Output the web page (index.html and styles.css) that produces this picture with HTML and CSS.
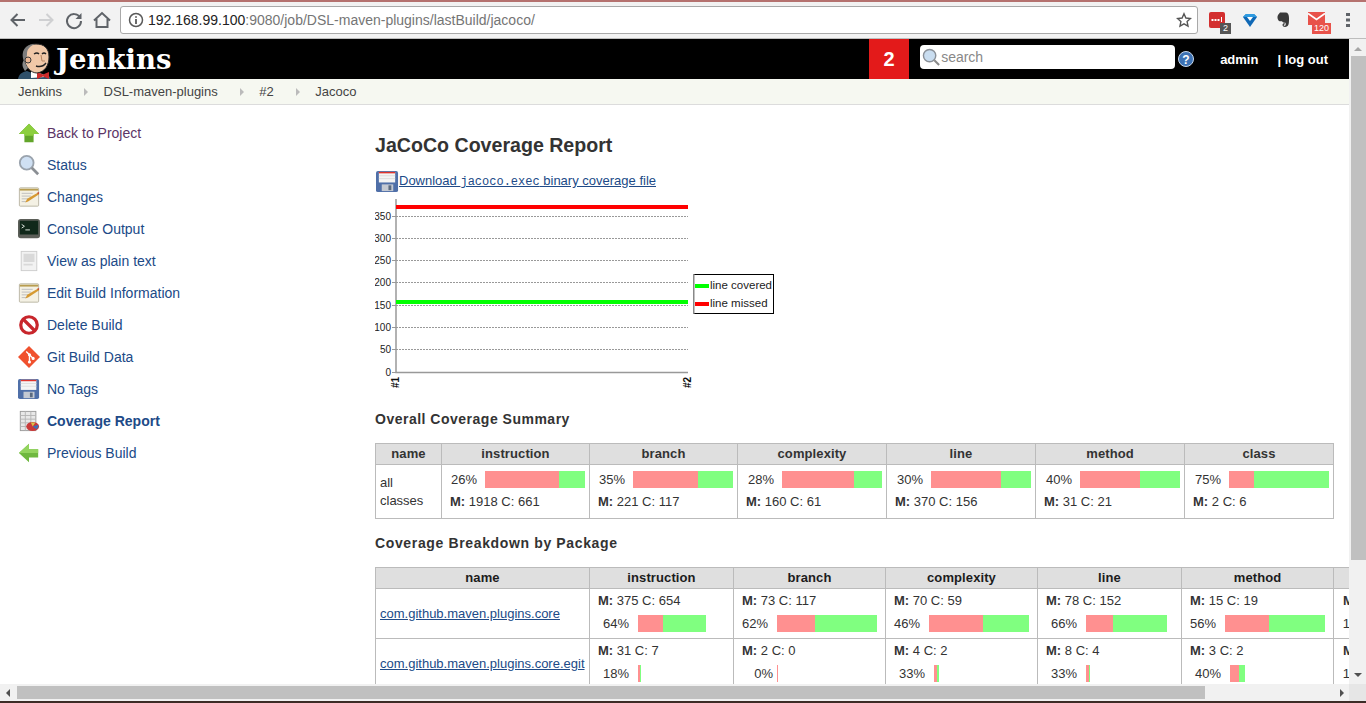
FILE: index.html
```html
<!DOCTYPE html>
<html lang="en">
<head>
<meta charset="utf-8">
<title>Jenkins</title>
<link rel="stylesheet" href="styles.css">
</head>
<body>
<div class="tabstrip"></div>
<div class="toolbar">
  <svg class="nav" width="22" height="22" viewBox="0 0 22 22"><path d="M18 11H5M10.500 5L4.500 11l6 6" fill="none" stroke="#5f6368" stroke-width="2"/></svg>
  <svg class="nav" width="22" height="22" viewBox="0 0 22 22"><path d="M4 11h13M11.500 5l6 6-6 6" fill="none" stroke="#cfd0d2" stroke-width="2"/></svg>
  <svg class="nav" width="22" height="22" viewBox="0 0 22 22"><path d="M17 8.500A7 7 0 1 0 18 12" fill="none" stroke="#5f6368" stroke-width="2"/><path d="M18.500 4v6h-6z" fill="#5f6368"/></svg>
  <svg class="nav" width="22" height="22" viewBox="0 0 22 22"><path d="M3 11.500L11 4l8 7.500M5.500 10v8h11v-8" fill="none" stroke="#5f6368" stroke-width="2"/></svg>
  <div class="omnibox">
    <svg width="16" height="16" viewBox="0 0 16 16"><circle cx="8" cy="8" r="6.500" fill="none" stroke="#5a5a5a" stroke-width="1.500"/><path d="M8 7v5M8 4.200v1.600" stroke="#5a5a5a" stroke-width="1.800"/></svg>
    <span class="url"><span class="host">192.168.99.100</span>:9080/job/DSL-maven-plugins/lastBuild/jacoco/</span>
    <svg class="star" width="16" height="16" viewBox="0 0 16 16"><path d="M8 1.800l1.900 4.200 4.600.5-3.400 3.100.9 4.500L8 11.800l-4 2.300.9-4.500L1.500 6.500l4.600-.5z" fill="none" stroke="#555" stroke-width="1.400"/></svg>
  </div>
  <div class="extensions">
    <span class="ext">
      <svg width="16" height="16" viewBox="0 0 16 16"><rect width="16" height="16" rx="2" fill="#d32f2f"/><path d="M2.500 7h2v2h-2zM5.500 7h2v2h-2zM8.500 7h2v2h-2zM12 5h1v5h-1z" fill="#fff"/></svg>
      <span class="ext-badge dark">2</span>
    </span>
    <span class="ext">
      <svg width="16" height="16" viewBox="0 0 16 16"><path d="M1 5l3-3h8l3 3-7 10z" fill="#0f68b5"/><path d="M1 5l3-3h8l3 3z" fill="#2f9be0"/><path d="M5 5h6L8 9z" fill="#fff"/></svg>
    </span>
    <span class="ext">
      <svg width="16" height="16" viewBox="0 0 16 16"><path d="M3 3l2-2.500h5.500c2.500 0 3.500 2 3.500 5.500s0 6-1 7.500c-1 2-5.500 2-5.500-.5 0-1.500 1.500-2 2.500-1.500l-.5 1c-1 0-1 1-.3 1.200 1 .3 2-.5 1.300-3-1.500 0-3-.5-3.500-1.500C7 9 5 10 3.500 8.500 2.500 7 2 5 3 3z" fill="#3a3a3a"/></svg>
    </span>
    <span class="ext mail">
      <svg width="17" height="13" viewBox="0 0 17 13"><rect width="17" height="13" fill="#e8524a"/><path d="M0 1.500l8.500 6 8.500-6" fill="none" stroke="#fff" stroke-width="1.800"/></svg>
      <span class="ext-badge red">120</span>
    </span>
    <svg class="menu-dots" width="4" height="14" viewBox="0 0 4 14"><path d="M0 0h4v3H0zM0 5.500h4v3H0zM0 11h4v3H0z" fill="#5f6368"/></svg>
  </div>
</div>
<div class="viewport">
  <div class="window">
    <div class="page">
      <header class="jenkins-bar">
        <svg class="butler" width="38" height="40" viewBox="0 0 38 40">
          <path d="M1 40c1-5 4-7 9-8l5 2 12 1c3 0 6 2 7 5z" fill="#2f5069"/>
          <path d="M14 32l11 3 3 3-14 1z" fill="#fff"/>
          <path d="M20 33l6 2.500 6-2.500v7l-6-2.500-6 2.500z" fill="#cc2b2b"/>
          <path d="M7 19C5 9 11 5 19 5c8 0 13 4 13 13 0 8-4 15-12 16-6 0-12-6-13-15z" fill="#f0c8a8" stroke="#2a2a2a"/>
          <path d="M7 22C3 12 9 5 18 5c-5 2-8 5-8 10 0 3-1 4-1 7z" fill="#7d7d7d"/>
          <path d="M7 21c-3 4-1 8 1 11l3-3c-2-3-3-5-4-8z" fill="#888"/>
          <circle cx="11" cy="21" r="3" fill="#eab795" stroke="#3a3a3a"/>
          <path d="M17 15q3-2 5 0M25 15q2-2 4 0M19 27q6 2 10-3" fill="none" stroke="#222" stroke-width="1.400"/>
          <path d="M24 16l1 6h3" fill="none" stroke="#b5835f"/>
        </svg>
        <span class="wordmark">Jenkins</span>
        <span class="count">2</span>
        <div class="searchbox">
          <svg width="19" height="19" viewBox="0 0 20 20"><circle cx="8" cy="8" r="6.500" fill="#c9ddf0" stroke="#8a9098" stroke-width="1.500"/><path d="M13 13l5 5" stroke="#8a8a8a" stroke-width="2.200"/></svg>
          <span class="search-hint">search</span>
        </div>
        <svg class="help" width="16" height="16" viewBox="0 0 16 16"><circle cx="8" cy="8" r="7.500" fill="#3d72b4" stroke="#c9d9ec"/><text x="8" y="12.500" text-anchor="middle" class="help-q">?</text></svg>
        <span class="user">admin</span>
        <span class="logout">| log out</span>
      </header>
      <nav class="crumbs">
        <span class="crumb">Jenkins</span><span class="sep"></span>
        <span class="crumb">DSL-maven-plugins</span><span class="sep"></span>
        <span class="crumb">#2</span><span class="sep"></span>
        <span class="crumb">Jacoco</span>
      </nav>
      <div class="main">
        <aside class="side">
          <a class="task visited"><svg class="ticon" viewBox="0 0 24 24"><path d="M12 2L1 13h6v9h10v-9h6z" fill="#62a52a"/><path d="M12 2L1 13h6v2h10v-2h6z" fill="#8ccf3e"/></svg>Back to Project</a>
          <a class="task"><svg class="ticon" viewBox="0 0 24 24"><circle cx="9.500" cy="9.500" r="7.500" fill="#cfe0f3" stroke="#9aa3ad" stroke-width="2"/><path d="M15 15l7 7" stroke="#8b8f94" stroke-width="3"/></svg>Status</a>
          <a class="task"><svg class="ticon" viewBox="0 0 24 24"><rect x="1.500" y="2" width="21" height="20" rx="1" fill="#f4f1e4" stroke="#b8b4a2"/><path d="M2 3h20v2H2z" fill="#b89d50"/><path d="M4 8h12M4 11h10M4 14h7M4 17h5" stroke="#bbb"/><path d="M8 18l2-4L22 7l1 2-12 8z" fill="#d69a32"/><path d="M20.500 7.500L23 6.500 23 9z" fill="#c94a3a"/></svg>Changes</a>
          <a class="task"><svg class="ticon" viewBox="0 0 24 24"><rect x="0" y="1" width="24" height="21" rx="3" fill="#5b5e58"/><rect x="2" y="3" width="20" height="15" fill="#10281a"/><path d="M4 7l3 2-3 2M8 13h5" fill="none" stroke="#e8efe8"/></svg>Console Output</a>
          <a class="task"><svg class="ticon" viewBox="0 0 24 24"><rect x="3.500" y="1.500" width="17" height="21" fill="#f2f2f2" stroke="#ccc"/><path d="M6 4h12v9H6zM6 15h10v2H6z" fill="#d9d9d9"/></svg>View as plain text</a>
          <a class="task"><svg class="ticon" viewBox="0 0 24 24"><rect x="1.500" y="2" width="21" height="20" rx="1" fill="#f4f1e4" stroke="#b8b4a2"/><path d="M2 3h20v2H2z" fill="#b89d50"/><path d="M4 8h12M4 11h10M4 14h7M4 17h5" stroke="#bbb"/><path d="M8 18l2-4L22 7l1 2-12 8z" fill="#d69a32"/><path d="M20.500 7.500L23 6.500 23 9z" fill="#c94a3a"/></svg>Edit Build Information</a>
          <a class="task"><svg class="ticon" viewBox="0 0 24 24"><circle cx="12" cy="12" r="9" fill="#fff" stroke="#c8262c" stroke-width="3.500"/><path d="M6 6l12 12" stroke="#c8262c" stroke-width="3.500"/></svg>Delete Build</a>
          <a class="task"><svg class="ticon" viewBox="0 0 24 24"><path d="M12 0l12 12-12 12L0 12z" fill="#f0512e"/><path d="M9 6l3.500 3.500v8M12.500 9.500l4 4" fill="none" stroke="#fff" stroke-width="1.500"/><circle cx="12.500" cy="9.500" r="1.700" fill="#fff"/><circle cx="12.500" cy="17.500" r="1.700" fill="#fff"/><circle cx="16.500" cy="13.500" r="1.700" fill="#fff"/></svg>Git Build Data</a>
          <a class="task"><svg class="ticon" viewBox="0 0 24 24"><rect x="0" y="1" width="23" height="22" rx="2" fill="#4f6fa8"/><rect x="3" y="2" width="17" height="11" fill="#f4f4f4"/><path d="M3 2h17v1.500H3z" fill="#e0342c"/><path d="M3 6h17M3 9h17" stroke="#ddd"/><rect x="6" y="15" width="12" height="7" fill="#c4c9d2"/><rect x="13" y="16" width="3" height="5" fill="#5a6a80"/></svg>No Tags</a>
          <a class="task current"><svg class="ticon" viewBox="0 0 24 24"><rect x="2.500" y="1.500" width="17" height="21" fill="#e8e8e8" stroke="#999"/><path d="M2.500 6h17M2.500 10h17M2.500 14h17M2.500 18h17M8 1.500v21M14 1.500v21" stroke="#b5b5b5"/><ellipse cx="16" cy="18" rx="7" ry="5" fill="#c93a3a"/><path d="M16 18l6-2a7 5 0 0 1-2 5z" fill="#3f6fb5"/><path d="M16 18l-2-4.500 5 .2z" fill="#d8c24a"/></svg>Coverage Report</a>
          <a class="task"><svg class="ticon" viewBox="0 0 24 24"><path d="M1 12L12 2v6h10v9H12v5z" fill="#6fb83f"/><path d="M1 12L12 2v6h10v4z" fill="#93d45e"/></svg>Previous Build</a>
        </aside>
        <main class="content">
          <h1 class="title">JaCoCo Coverage Report</h1>
          <p class="download">
            <svg class="dl-icon" viewBox="0 0 24 24"><rect x="0" y="1" width="23" height="22" rx="2" fill="#4f6fa8"/><rect x="3" y="2" width="17" height="11" fill="#f4f4f4"/><path d="M3 2h17v1.500H3z" fill="#e0342c"/><path d="M3 6h17M3 9h17" stroke="#ddd"/><rect x="6" y="15" width="12" height="7" fill="#c4c9d2"/><rect x="13" y="16" width="3" height="5" fill="#5a6a80"/></svg><a class="dl-link">Download <code class="mono">jacoco.exec</code> binary coverage file</a>
          </p>
          <svg class="chart" width="400" height="200" viewBox="0 0 400 200">
            <g class="grid">
              <path d="M21 19.500H313M21 41.500H313M21 63.500H313M21 85.500H313M21 108.500H313M21 130.500H313M21 152.500H313"/>
            </g>
            <path class="axis" d="M21 2V175.500H313"/>
            <path class="tick" d="M17 19.500h4M17 41.500h4M17 63.500h4M17 85.500h4M17 108.500h4M17 130.500h4M17 152.500h4M17 175.500h4"/>
            <g class="ylabels">
              <text x="16" y="23">350</text>
              <text x="16" y="45">300</text>
              <text x="16" y="67">250</text>
              <text x="16" y="89">200</text>
              <text x="16" y="112">150</text>
              <text x="16" y="134">100</text>
              <text x="16" y="156">50</text>
              <text x="16" y="179">0</text>
            </g>
            <text class="xlabel" transform="translate(24 191) rotate(-90)">#1</text>
            <text class="xlabel" transform="translate(316 191) rotate(-90)">#2</text>
            <rect x="21" y="8" width="292" height="4" fill="#f00"/>
            <rect x="21" y="103" width="292" height="4" fill="#0f0"/>
            <rect class="legend" x="318.500" y="77.500" width="80" height="39"/>
            <rect x="318" y="77" width="1.500" height="40" fill="#888"/>
            <rect x="320" y="87" width="14" height="4" fill="#0f0"/>
            <rect x="320" y="105" width="14" height="4" fill="#f00"/>
            <text class="legend-text" x="335" y="92">line covered</text>
            <text class="legend-text" x="335" y="110">line missed</text>
          </svg>
          <h2 class="section first">Overall Coverage Summary</h2>
          <table class="cov summary">
            <thead>
              <tr><th class="c-name">name</th><th class="c-a">instruction</th><th class="c-a">branch</th><th class="c-b">complexity</th><th class="c-b">line</th><th class="c-b">method</th><th class="c-b">class</th></tr>
            </thead>
            <tbody>
              <tr>
                <td class="label">all classes</td>
                <td><div class="pct-row"><span class="pct">26%</span><span class="bar"><i class="miss w74"></i><i class="cover"></i></span></div><div class="mc"><b>M:</b> 1918 C: 661</div></td>
                <td><div class="pct-row"><span class="pct">35%</span><span class="bar"><i class="miss w65"></i><i class="cover"></i></span></div><div class="mc"><b>M:</b> 221 C: 117</div></td>
                <td><div class="pct-row"><span class="pct">28%</span><span class="bar"><i class="miss w72"></i><i class="cover"></i></span></div><div class="mc"><b>M:</b> 160 C: 61</div></td>
                <td><div class="pct-row"><span class="pct">30%</span><span class="bar"><i class="miss w70"></i><i class="cover"></i></span></div><div class="mc"><b>M:</b> 370 C: 156</div></td>
                <td><div class="pct-row"><span class="pct">40%</span><span class="bar"><i class="miss w60"></i><i class="cover"></i></span></div><div class="mc"><b>M:</b> 31 C: 21</div></td>
                <td><div class="pct-row"><span class="pct">75%</span><span class="bar"><i class="miss w25"></i><i class="cover"></i></span></div><div class="mc"><b>M:</b> 2 C: 6</div></td>
              </tr>
            </tbody>
          </table>
          <h2 class="section breakdown">Coverage Breakdown by Package</h2>
          <table class="cov packages">
            <thead>
              <tr><th class="p-name">name</th><th class="p-a">instruction</th><th class="p-b">branch</th><th class="p-b">complexity</th><th class="p-a">line</th><th class="p-b">method</th><th class="p-a">class</th></tr>
            </thead>
            <tbody>
              <tr>
                <td class="label"><a class="pkg">com.github.maven.plugins.core</a></td>
                <td><div class="mc top"><b>M:</b> 375 C: 654</div><div class="pct-end"><span class="pct">64%</span><span class="bar w68"><i class="miss b25"></i><i class="cover"></i></span></div></td>
                <td><div class="mc top"><b>M:</b> 73 C: 117</div><div class="pct-end near"><span class="pct">62%</span><span class="bar"><i class="miss w38"></i><i class="cover"></i></span></div></td>
                <td><div class="mc top"><b>M:</b> 70 C: 59</div><div class="pct-end near"><span class="pct">46%</span><span class="bar"><i class="miss w54"></i><i class="cover"></i></span></div></td>
                <td><div class="mc top"><b>M:</b> 78 C: 152</div><div class="pct-end"><span class="pct">66%</span><span class="bar w81"><i class="miss b27"></i><i class="cover"></i></span></div></td>
                <td><div class="mc top"><b>M:</b> 15 C: 19</div><div class="pct-end near"><span class="pct">56%</span><span class="bar"><i class="miss w44"></i><i class="cover"></i></span></div></td>
                <td><div class="mc top far"><b>M:</b> 0 C: 6</div><div class="pct-end wide"><span class="pct">100%</span></div></td>
              </tr>
              <tr>
                <td class="label"><a class="pkg">com.github.maven.plugins.core.egit</a></td>
                <td><div class="mc top"><b>M:</b> 31 C: 7</div><div class="pct-end"><span class="pct">18%</span><span class="bar w3"><i class="miss w65"></i><i class="cover"></i></span></div></td>
                <td><div class="mc top"><b>M:</b> 2 C: 0</div><div class="pct-end tight"><span class="pct">0%</span><span class="bar w1"><i class="miss w100"></i></span></div></td>
                <td><div class="mc top"><b>M:</b> 4 C: 2</div><div class="pct-end"><span class="pct">33%</span><span class="bar w5"><i class="miss w65"></i><i class="cover"></i></span></div></td>
                <td><div class="mc top"><b>M:</b> 8 C: 4</div><div class="pct-end"><span class="pct">33%</span><span class="bar w4"><i class="miss w65"></i><i class="cover"></i></span></div></td>
                <td><div class="mc top"><b>M:</b> 3 C: 2</div><div class="pct-end"><span class="pct">40%</span><span class="bar w15"><i class="miss w60"></i><i class="cover"></i></span></div></td>
                <td><div class="mc top far"><b>M:</b> 0 C: 2</div><div class="pct-end wide"><span class="pct">100%</span></div></td>
              </tr>
            </tbody>
          </table>
        </main>
      </div>
    </div>
    <div class="vscroll">
      <span class="arrow up"></span>
      <span class="vthumb"></span>
      <span class="arrow down"></span>
    </div>
  </div>
  <div class="hscroll">
    <span class="arrow left"></span>
    <span class="hthumb"></span>
    <span class="arrow right"></span>
    <span class="corner"></span>
  </div>
</div>
<div class="taskbar"></div>
</body>
</html>
```
FILE: styles.css
```css
* { box-sizing: border-box; }
html, body { margin: 0; height: 703px; overflow: hidden; }
body {
  display: flex;
  flex-direction: column;
  background: #fff;
  font-family: "Liberation Sans", Arial, sans-serif;
  font-size: 14px;
  color: #333;
}
.tabstrip { height: 2px; background: #b5726f; flex: none; }
.toolbar {
  height: 37px;
  flex: none;
  display: flex;
  align-items: center;
  padding: 0 16px 0 4px;
  background: #f2f2f2;
  border-bottom: 1px solid #bdbdbd;
}
.nav { flex: none; margin: 0 3px; }
.omnibox {
  flex: 1;
  height: 28px;
  margin-left: 4px;
  display: flex;
  align-items: center;
  padding: 0 5px 0 7px;
  gap: 4px;
  background: #fff;
  border: 1px solid #a9a9a9;
  border-radius: 3px;
}
.url { flex: 1; font-size: 14px; color: #757575; }
.host { color: #222; }
.extensions { display: flex; align-items: center; gap: 17px; margin-left: 11px; }
.ext { position: relative; display: block; width: 16px; height: 16px; }
.ext svg { display: block; }
.ext-badge {
  position: absolute;
  top: 11px;
  left: 11px;
  height: 11px;
  padding: 0 3px;
  font-size: 9px;
  line-height: 11px;
  color: #fff;
}
.ext-badge.dark { background: #555; }
.ext-badge.red { background: #e8524a; left: 4px; padding: 0 2px; }
.menu-dots { margin-left: 5px; }

.viewport { flex: 1; min-height: 0; display: flex; flex-direction: column; }
.window { flex: 1; min-height: 0; display: flex; }
.page { flex: 1; min-width: 0; overflow: hidden; }

.jenkins-bar {
  height: 40px;
  display: flex;
  align-items: center;
  background: #000;
  color: #fff;
  padding-left: 17px;
}
.butler { flex: none; align-self: flex-end; }
.wordmark {
  font-family: "DejaVu Serif", Georgia, serif;
  font-weight: bold;
  font-size: 27.500px;
  margin-left: 1px;
  margin-right: auto;
  padding-bottom: 1px;
}
.count {
  width: 40px;
  align-self: stretch;
  background: #e31a1a;
  font-size: 20px;
  font-weight: bold;
  line-height: 40px;
  text-align: center;
}
.searchbox {
  width: 255px;
  height: 24px;
  margin-left: 11px;
  margin-bottom: 4px;
  display: flex;
  align-items: center;
  padding-left: 2px;
  background: #fff;
  border-radius: 4px;
}
.search-hint { font-size: 14px; color: #888; }
.help { margin-left: 3px; margin-right: 26px; }
.help-q { font-size: 12px; font-weight: bold; fill: #fff; font-family: "Liberation Sans", sans-serif; }
.user { font-size: 13px; font-weight: bold; margin-right: 19px; }
.logout { font-size: 13px; font-weight: bold; margin-right: 21px; }

.crumbs {
  height: 26px;
  display: flex;
  align-items: center;
  padding-left: 18px;
  background: #f6f8f1;
  border-bottom: 1px solid #dcdcdc;
  font-size: 13px;
  color: #444;
}
.sep {
  width: 0;
  height: 0;
  margin: 0 15.500px 0 22px;
  border-left: 4px solid #bbb;
  border-top: 4px solid transparent;
  border-bottom: 4px solid transparent;
}

.main { display: flex; width: 1349px; }
.side { width: 375px; flex: none; padding: 12px 0 0 18px; }
.task {
  height: 32px;
  display: flex;
  align-items: center;
  gap: 7px;
  color: #204a87;
  font-size: 14px;
}
.task.visited { color: #5c3566; }
.task.current { font-weight: bold; }
.ticon { width: 22px; height: 22px; flex: none; }

.content { flex: 1; min-width: 0; }
.title { margin: 27px 0 0; font-size: 19.600px; line-height: 27px; color: #333; }
.download {
  margin: 10px 0 0;
  height: 24px;
  display: flex;
  align-items: center;
}
.dl-icon { width: 23px; height: 23px; margin-left: 1px; flex: none; }
.dl-link { color: #204a87; text-decoration: underline; font-size: 13px; }
.mono { font-family: "Liberation Mono", monospace; font-size: 12px; }
.chart { display: block; margin-top: 4px; }
.grid path { stroke: #999; stroke-dasharray: 2 1; fill: none; }
.axis { stroke: #999; stroke-width: 1.500; fill: none; }
.tick { stroke: #999; fill: none; }
.ylabels text {
  font-size: 10px;
  text-anchor: end;
  fill: #222;
  font-family: "Liberation Sans", sans-serif;
}
.xlabel { font-size: 10px; font-weight: bold; fill: #111; font-family: "Liberation Sans", sans-serif; }
.legend { fill: #fff; stroke: #000; }
.legend-text { font-size: 11.500px; fill: #222; font-family: "Liberation Sans", sans-serif; }

.section {
  margin: 14px 0 0;
  font-size: 14px;
  line-height: 17px;
  letter-spacing: .5px;
  color: #333;
}
.section.breakdown { margin-top: 16px; letter-spacing: .64px; }

.cov {
  table-layout: fixed;
  border-collapse: collapse;
  margin-top: 15px;
  font-size: 13px;
}
.cov th, .cov td { border: 1px solid #bbb; padding: 0; vertical-align: top; }
.cov th {
  height: 21px;
  background: #dfdfdf;
  font-size: 13px;
  line-height: 20px;
  letter-spacing: .1px;
  text-align: center;
}
.summary { width: 958px; }
.packages { width: 1062px; }
.packages th { color: #1c1c1c; }
.summary td { height: 54px; }
.packages td { height: 50px; }
.c-name { width: 66px; }
.c-a { width: 148px; }
.c-b { width: 149px; }
.p-name { width: 214px; }
.p-a { width: 144px; }
.p-b { width: 152px; }

.cov .label { padding: 0 4px; line-height: 18px; vertical-align: middle; }
.pkg { color: #204a87; text-decoration: underline; white-space: nowrap; }

.pct-row { display: flex; align-items: center; justify-content: flex-end; gap: 8px; height: 17px; margin: 6px 4px 0 0; }
.mc { margin: 5px 0 0 8px; line-height: 18px; white-space: nowrap; }
.mc.top { margin: 3px 0 0 8px; }
.mc.top.far { margin-left: 9px; }
.pct-end { display: flex; align-items: center; gap: 9px; height: 17px; margin-top: 5px; white-space: nowrap; }
.pct-end .pct { width: 39px; flex: none; text-align: right; }
.pct-end.near .pct { width: 34px; }
.pct-end.tight { gap: 4px; }
.pct-end.wide .pct { width: 42px; text-align: right; }

.bar { display: flex; width: 100px; height: 17px; flex: none; }
.bar i { display: block; height: 100%; }
.miss { background: #ff9090; }
.cover { background: #80ff80; flex: 1; }
.w25 { width: 25%; }
.w38 { width: 38%; }
.w44 { width: 44%; }
.w54 { width: 54%; }
.w60 { width: 60%; }
.w65 { width: 65%; }
.w70 { width: 70%; }
.w72 { width: 72%; }
.w74 { width: 74%; }
.w100 { width: 100%; }
.b25 { width: 25px; }
.b27 { width: 27px; }
.bar.w68 { width: 68px; }
.bar.w81 { width: 81px; }
.bar.w1 { width: 1px; }
.bar.w3 { width: 3px; }
.bar.w4 { width: 4px; }
.bar.w5 { width: 5px; }
.bar.w15 { width: 15px; }

.vscroll {
  width: 17px;
  flex: none;
  display: flex;
  flex-direction: column;
  align-items: center;
  background: #f1f1f1;
}
.vthumb { width: 15px; height: 504px; align-self: flex-end; background: #c0c0c0; }
.hscroll { height: 17px; flex: none; display: flex; align-items: center; background: #f1f1f1; }
.hthumb { width: 1188px; height: 13px; margin-left: 7px; background: #c0c0c0; }
.corner { width: 17px; height: 17px; margin-left: 5px; background: #e6e6e6; }
.arrow { width: 0; height: 0; flex: none; border: 4px solid transparent; }
.arrow.up { border-top: 0; border-bottom: 4px solid #a5a5a5; margin-top: 8px; margin-bottom: 5px; }
.arrow.down { margin-top: auto; margin-bottom: 7px; border-bottom: 0; border-top: 4px solid #505050; }
.arrow.left { margin-left: 6px; border-left: 0; border-right: 4px solid #505050; }
.arrow.right { margin-left: auto; border-right: 0; border-left: 4px solid #505050; }
.taskbar { height: 2px; flex: none; background: #3d2b26; }
```
